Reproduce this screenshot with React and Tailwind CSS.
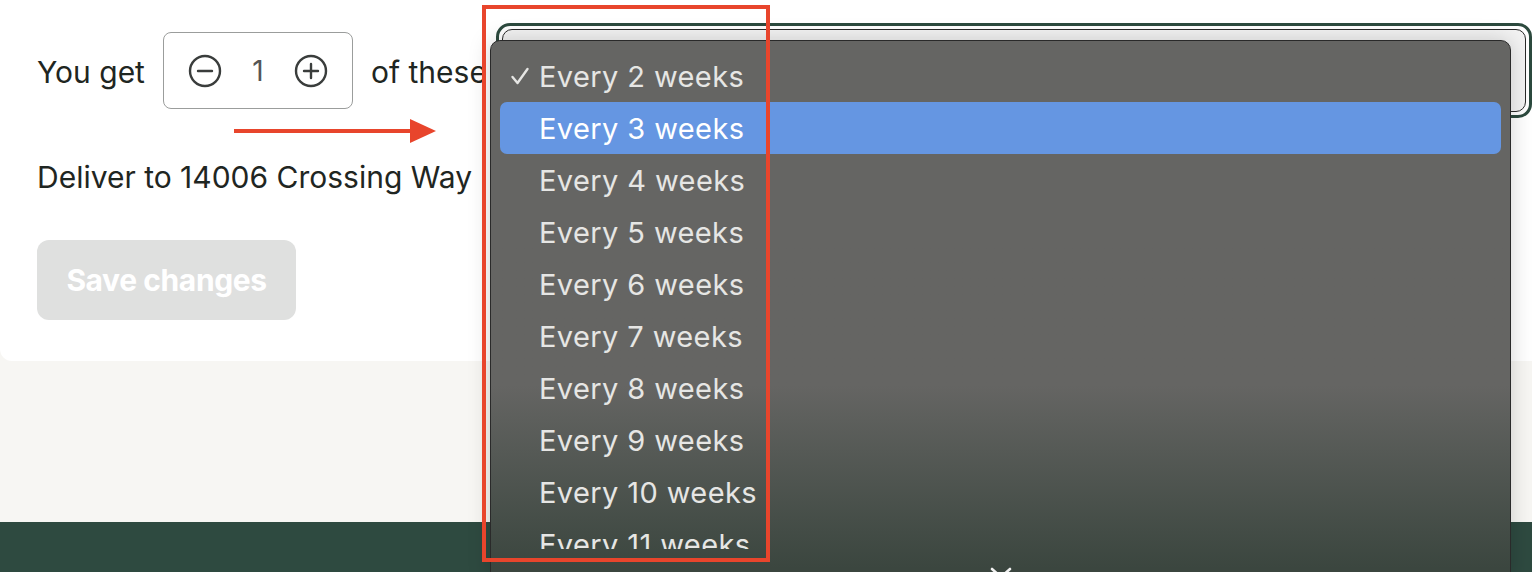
import React from 'react';

const weeks = [2, 3, 4, 5, 6, 7, 8, 9, 10, 11, 12];

function CircleIcon({ plus }) {
  return (
    <svg width="34" height="34" viewBox="0 0 34 34" fill="none" stroke="#3a3d3c" strokeWidth="2.4" strokeLinecap="round">
      <circle cx="17" cy="17" r="15" />
      <line x1="10" y1="17" x2="24" y2="17" />
      {plus && <line x1="17" y1="10" x2="17" y2="24" />}
    </svg>
  );
}

function MenuItem({ n, checked, active }) {
  return (
    <div className={`flex items-center h-[52px] shrink-0 rounded-[7px] ${active ? 'bg-[#6596e2] text-white' : 'text-[#e6e6e4]'}`}>
      <span className="w-[39px] shrink-0 flex justify-end pr-[9px]">
        {checked && (
          <svg width="20" height="20" viewBox="0 0 20 20" fill="none" stroke="#e6e6e4" strokeWidth="2.4" strokeLinecap="round" strokeLinejoin="round">
            <polyline points="2.5,11 7.5,17 17.5,3" />
          </svg>
        )}
      </span>
      <span className="text-[29px] leading-none tracking-[0.4px]">Every {n} weeks</span>
    </div>
  );
}

export default function App() {
  return (
    <div className="relative w-[1532px] h-[572px] overflow-hidden bg-[#f7f6f3] text-[#1f2622]" style={{ fontFamily: 'Inter, "Noto Sans", sans-serif' }}>
      {/* card */}
      <div className="bg-white rounded-bl-[12px] h-[361px] pl-[37px] pt-[23px]">
        <div className="flex items-center h-[95px] text-[30px]">
          <span className="w-[126px] shrink-0 pt-[4px]">You get</span>
          <div className="w-[190px] h-[77px] shrink-0 border border-[#9b9d9c] rounded-[8px] flex items-center justify-between px-[24px]">
            <CircleIcon />
            <span className="text-[28px] text-[#555]">1</span>
            <CircleIcon plus />
          </div>
          <span className="ml-[18px] w-[125px] shrink-0 whitespace-nowrap pt-[4px]">of these</span>
          <div className="flex-1 h-[95px] rounded-[14px] border-[3px] border-[#2c4a3e] p-[3px]">
            <div className="h-full rounded-[10px] border border-[#2a2a2a] bg-[#f3f3f3]" />
          </div>
        </div>
        <p className="mt-[41px] w-[447px] overflow-hidden text-[30px] leading-[36px] whitespace-nowrap">Deliver to 14006 Crossing Way East</p>
        <button className="mt-[45px] w-[259px] h-[80px] rounded-[12px] bg-[#dfe0df] text-white text-[30px] font-bold tracking-[-0.4px]">
          Save changes
        </button>
      </div>
      <div className="h-[161px]" />
      <div className="h-[50px] bg-[#2e4a40]" />

      {/* annotation arrow */}
      <svg className="absolute left-[232px] top-[117px]" width="206" height="28" viewBox="0 0 206 28">
        <rect x="2" y="12" width="180" height="4" fill="#e8452c" />
        <polygon points="178,2 204,14 178,26" fill="#e8452c" />
      </svg>

      {/* native select popup */}
      <div className="absolute left-[490px] top-[40px] w-[1021px] h-[540px] rounded-t-[10px] border border-[#2a2a2a] bg-linear-to-b from-[#656563] from-[64%] to-[#3b463f] to-[98%] shadow-[0_0_22px_rgba(0,0,0,0.18)] px-[9px] pt-[9px]">
        <div className="h-[499px] overflow-hidden flex flex-col">
          {weeks.map((n) => (
            <MenuItem key={n} n={n} checked={n === 2} active={n === 3} />
          ))}
        </div>
        <div className="flex justify-center pt-[17px]">
          <svg width="24" height="14" viewBox="0 0 24 14" fill="none" stroke="#f2f2f2" strokeWidth="2.6" strokeLinecap="round">
            <polyline points="3,3 12,11 21,3" />
          </svg>
        </div>
      </div>

      {/* annotation box */}
      <div className="absolute left-[482px] top-[5px] w-[288px] h-[557px] border-4 border-[#e8452c]" />
    </div>
  );
}
